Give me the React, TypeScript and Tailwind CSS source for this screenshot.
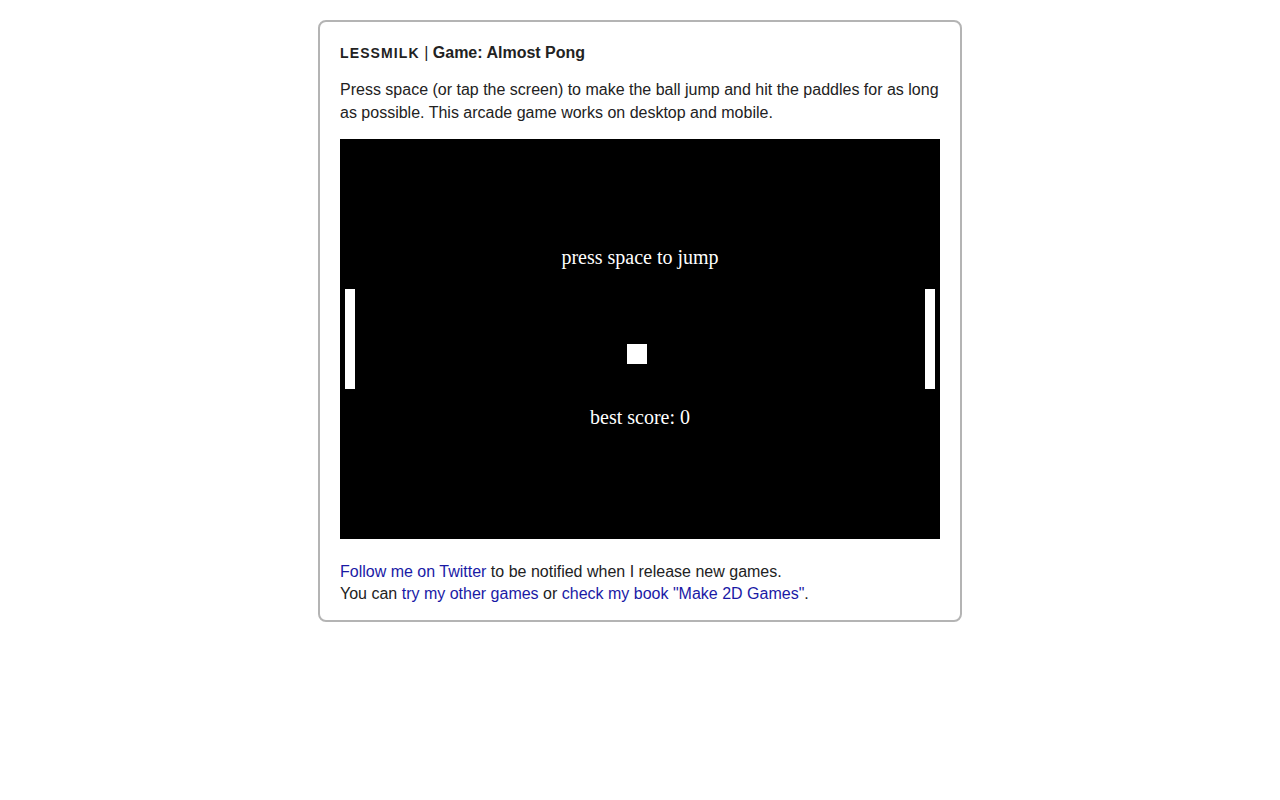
export default function App() {
  return (
    <div className="min-h-screen bg-white pt-5 font-['Liberation_Sans',Arial,sans-serif] text-[#222]">
      <div className="mx-auto flex w-[644px] flex-col rounded-lg border-2 border-[#b4b4b4] px-5 pt-[21px] pb-[15px]">
        <h1 className="h-5 text-base leading-5 font-bold">
          <span className="text-sm tracking-[0.08em]">LESSMILK</span>
          <span className="font-normal"> | </span>
          <span>Game: Almost Pong</span>
        </h1>
        <p className="mt-[15px] text-base leading-[23px]">
          Press space (or tap the screen) to make the ball jump and hit the paddles for as long
          as possible. This arcade game works on desktop and mobile.
        </p>
        <div className="relative mt-[15px] h-[400px] w-[600px] bg-black font-['Liberation_Serif','Times_New_Roman',serif] text-white">
          <div className="absolute top-[106px] left-0 w-full text-center text-[20px] leading-6">
            press space to jump
          </div>
          <div className="absolute top-[150px] left-[5px] h-[100px] w-[10px] bg-white" />
          <div className="absolute top-[150px] right-[5px] h-[100px] w-[10px] bg-white" />
          <div className="absolute top-[205px] left-[287px] h-[20px] w-[20px] bg-white" />
          <div className="absolute top-[266px] left-0 w-full text-center text-[20px] leading-6">
            best score: 0
          </div>
        </div>
        <div className="mt-[22px] flex flex-col text-base leading-[22px]">
          <p>
            <a href="#" className="text-[#1a1aa6]">Follow me on Twitter</a> to be notified when I release new games.
          </p>
          <p>
            You can <a href="#" className="text-[#1a1aa6]">try my other games</a> or{' '}
            <a href="#" className="text-[#1a1aa6]">check my book "Make 2D Games"</a>.
          </p>
        </div>
      </div>
    </div>
  )
}
